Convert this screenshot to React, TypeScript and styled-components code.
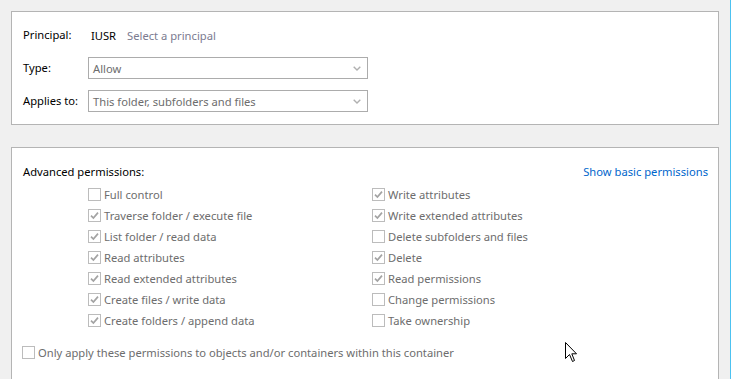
import React from 'react';
import styled, { createGlobalStyle } from 'styled-components';

const FONT = '"Noto Sans", "Open Sans", "Liberation Sans", sans-serif';
const BORDER = '#b4b4b4';
const GREY_TEXT = '#6d6d6d';

const GlobalStyle = createGlobalStyle`
  html, body {
    margin: 0;
    padding: 0;
    background: #f0f0f0;
    font-family: ${FONT};
    font-size: 11.2px;
    color: #000;
  }
`;

const Page = styled.div`
  position: relative;
  width: 731px;
  height: 379px;
  overflow: hidden;
  display: flex;
  background: #f0f0f0;
`;

const Content = styled.div`
  flex: 1;
  padding: 11px 11px 0 11px;
  display: flex;
  flex-direction: column;
  gap: 22px;
`;

const WindowEdge = styled.div`
  width: 1px;
  background: #4cc2f1;
`;

const Panel = styled.div<{ $grow?: boolean }>`
  background: #fff;
  border: 1px solid ${BORDER};
  border-bottom: ${(p) => (p.$grow ? 'none' : `1px solid ${BORDER}`)};
  flex: ${(p) => (p.$grow ? 1 : 'none')};
`;

const FormGrid = styled.div`
  display: grid;
  grid-template-columns: 65px 280px;
  grid-auto-rows: 22px;
  row-gap: 11px;
  padding: 12px 0 12px 11px;
  align-items: center;
`;

const Label = styled.div`
  line-height: 22px;
  white-space: nowrap;
`;

const PrincipalValue = styled.div`
  display: flex;
  gap: 11px;
  padding-left: 3px;
`;

const DisabledLink = styled.span`
  color: #7b7b90;
`;

const Select = styled.div`
  box-sizing: border-box;
  height: 22px;
  border: 1px solid #acacac;
  display: flex;
  align-items: center;
  justify-content: space-between;
  padding: 0 6px 0 4px;
  color: ${GREY_TEXT};
  background: #fff;
`;

const Permissions = styled.div`
  padding: 13px 10px 0 11px;
`;

const HeaderRow = styled.div`
  display: flex;
  justify-content: space-between;
  align-items: center;
  height: 21px;
  margin-bottom: 2px;
`;

const ShowBasic = styled.span`
  color: #0066cc;
`;

const Columns = styled.div`
  display: grid;
  grid-template-columns: 284px 1fr;
  margin-left: 65px;
`;

const Column = styled.div`
  display: flex;
  flex-direction: column;
`;

const CheckRow = styled.div<{ $indent?: number }>`
  display: flex;
  align-items: center;
  gap: 3px;
  height: 21px;
  color: ${GREY_TEXT};
  margin-left: ${(p) => p.$indent ?? 0}px;
  white-space: nowrap;
`;

const Box = styled.span`
  box-sizing: border-box;
  width: 13px;
  height: 13px;
  border: 1px solid #bcbcbc;
  background: #fff;
  display: flex;
  align-items: center;
  justify-content: center;
  flex: none;
`;

const OnlyApply = styled.div`
  margin-top: 11px;
`;

const Cursor = styled.svg`
  position: absolute;
  left: 565px;
  top: 342px;
`;

const Chevron = () => (
  <svg width="8" height="5" viewBox="0 0 8 5">
    <path d="M0.7 0.7 L4 4 L7.3 0.7" fill="none" stroke="#b0b0b0" strokeWidth="1.4" />
  </svg>
);

const Check = ({ checked, label, indent }: { checked: boolean; label: string; indent?: number }) => (
  <CheckRow $indent={indent}>
    <Box>
      {checked && (
        <svg width="11" height="11" viewBox="0 0 11 11">
          <path d="M2 5.6 L4.4 8 L9 2.6" fill="none" stroke="#a3a3a3" strokeWidth="1.7" />
        </svg>
      )}
    </Box>
    {label}
  </CheckRow>
);

const left = [
  { label: 'Full control', checked: false },
  { label: 'Traverse folder / execute file', checked: true },
  { label: 'List folder / read data', checked: true },
  { label: 'Read attributes', checked: true },
  { label: 'Read extended attributes', checked: true },
  { label: 'Create files / write data', checked: true },
  { label: 'Create folders / append data', checked: true },
];

const right = [
  { label: 'Write attributes', checked: true },
  { label: 'Write extended attributes', checked: true },
  { label: 'Delete subfolders and files', checked: false },
  { label: 'Delete', checked: true },
  { label: 'Read permissions', checked: true },
  { label: 'Change permissions', checked: false },
  { label: 'Take ownership', checked: false },
];

export default function App() {
  return (
    <Page>
      <GlobalStyle />
      <Content>
        <Panel>
          <FormGrid>
            <Label>Principal:</Label>
            <PrincipalValue>
              <span>IUSR</span>
              <DisabledLink>Select a principal</DisabledLink>
            </PrincipalValue>
            <Label>Type:</Label>
            <Select>
              Allow
              <Chevron />
            </Select>
            <Label>Applies to:</Label>
            <Select>
              This folder, subfolders and files
              <Chevron />
            </Select>
          </FormGrid>
        </Panel>
        <Panel $grow>
          <Permissions>
            <HeaderRow>
              <span>Advanced permissions:</span>
              <ShowBasic>Show basic permissions</ShowBasic>
            </HeaderRow>
            <Columns>
              <Column>
                {left.map((item) => (
                  <Check key={item.label} {...item} />
                ))}
              </Column>
              <Column>
                {right.map((item) => (
                  <Check key={item.label} {...item} />
                ))}
              </Column>
            </Columns>
            <OnlyApply>
              <Check
                checked={false}
                indent={-1}
                label="Only apply these permissions to objects and/or containers within this container"
              />
            </OnlyApply>
          </Permissions>
        </Panel>
      </Content>
      <WindowEdge />
      <Cursor width="13" height="22" viewBox="0 0 13 22">
        <path
          d="M0.5 0.5 L0.5 16.5 L4.5 12.5 L7.5 19.5 L9.5 18.5 L6.8 11.8 L11.5 11.8 Z"
          fill="#fff"
          stroke="#000"
          strokeWidth="1"
        />
      </Cursor>
    </Page>
  );
}
